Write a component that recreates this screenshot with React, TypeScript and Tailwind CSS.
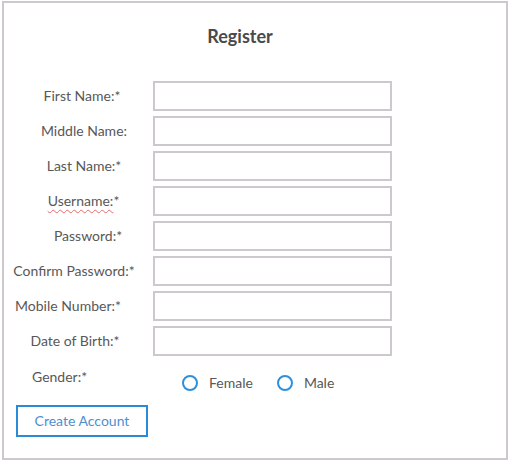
const fields: { label: string; required: boolean; shift: string; spell?: boolean }[] = [
  { label: 'First Name:', required: true, shift: 'pl-[12px]' },
  { label: 'Middle Name:', required: false, shift: 'pl-[16px]' },
  { label: 'Last Name:', required: true, shift: 'pl-[16px]' },
  { label: 'Username:', required: true, shift: 'pl-[15px]', spell: true },
  { label: 'Password:', required: true, shift: 'pl-[24px]' },
  { label: 'Confirm Password:', required: true, shift: 'pr-[4px]' },
  { label: 'Mobile Number:', required: true, shift: 'pr-[16px]' },
  { label: 'Date of Birth:', required: true, shift: 'pr-[2px]' },
];

function Radio({ label }: { label: string }) {
  return (
    <label className="flex items-center gap-[11px]">
      <span className="w-4 h-4 rounded-full border-2 border-[#2f8fd9] bg-white" />
      <span>{label}</span>
    </label>
  );
}

export default function App() {
  return (
    <div className="min-h-[461px] bg-white pt-px pl-[2px] font-['Lato',sans-serif] text-[14px] leading-5 text-[#585858]">
      <div className="w-[506px] h-[459px] border-2 border-[#cdc8ce] pt-[21px] pl-px">
        {/* Header */}
        <h1 className="w-[470px] text-center text-[18px] leading-6 font-bold text-[#4a4a4a]">
          Register
        </h1>

        {/* Fields */}
        <div className="mt-[33px] flex flex-col gap-[5px]">
          {fields.map((f) => (
            <div key={f.label} className="flex items-center gap-[6px]">
              <div className={`w-[142px] text-center ${f.shift}`}>
                <span
                  className={
                    f.spell
                      ? 'underline decoration-wavy decoration-[#e86a6a] decoration-1 underline-offset-[3px]'
                      : ''
                  }
                >
                  {f.label}
                </span>
                {f.required && '*'}
              </div>
              <input
                type="text"
                className="w-[239px] h-[30px] border-2 border-[#cdc8ce] bg-white outline-none px-2"
              />
            </div>
          ))}
        </div>

        {/* Gender */}
        <div className="mt-[11px] flex items-start">
          <div className="w-[148px] pl-[27px]">Gender:*</div>
          <div className="mt-[6px] pl-[29px] flex items-center gap-[24px]">
            <Radio label="Female" />
            <Radio label="Male" />
          </div>
        </div>

        <button className="mt-[12px] ml-[11px] w-[132px] h-[32px] border-2 border-[#2b8ad6] text-[#4d8fcf] bg-white">
          Create Account
        </button>
      </div>
    </div>
  );
}
